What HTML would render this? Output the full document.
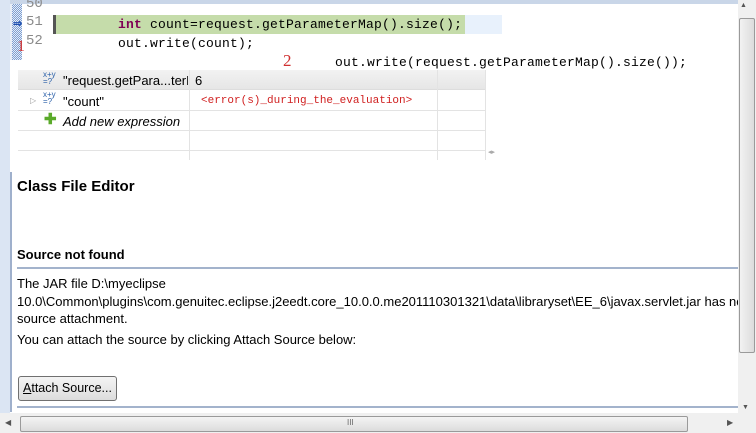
<!DOCTYPE html>
<html><head><style>
*{margin:0;padding:0;box-sizing:border-box}
body{width:756px;height:433px;overflow:hidden;background:#fff;position:relative;font-family:"Liberation Sans",sans-serif}
.a{position:absolute}
.code{font-family:"Liberation Mono",monospace;font-size:13px;color:#000;white-space:pre}
.t{font-size:13px;color:#000;white-space:pre}
</style></head><body>
<div class="a" style="left:0;top:0;width:756px;height:4px;background:#c9d6e8"></div>
<div class="a" style="left:0;top:0;width:10px;height:433px;background:#dbe5f3"></div>
<div class="a" style="left:10px;top:4px;width:2px;height:56px;background:#e8eef7"></div>
<div class="a" style="left:12px;top:4px;width:10px;height:56px;background:repeating-conic-gradient(#7f9fd0 0 25%,#e4ecf8 0 50%) 0 0/2px 2px"></div>
<div class="a code" style="left:26px;top:-4px;color:#8a8a8a;font-size:14px">50</div>
<div class="a code" style="left:26px;top:14px;color:#8a8a8a;font-size:14px">51</div>
<div class="a code" style="left:26px;top:33px;color:#8a8a8a;font-size:14px">52</div>
<div class="a" style="left:13px;top:17px;font-size:11px;color:#2050b0;font-weight:bold">⇒</div>
<div class="a" style="left:17px;top:38px;font-size:16px;color:#d03030;font-family:'Liberation Serif',serif">1</div>
<div class="a" style="left:53px;top:15px;width:48px;height:19px;background:#fff;border-left:3px solid #555"></div>
<div class="a" style="left:56px;top:15px;width:409px;height:19px;background:#c5dcaa"></div>
<div class="a" style="left:465px;top:15px;width:37px;height:19px;background:#e8f1fc"></div>
<div class="a code" style="left:118px;top:17px;letter-spacing:0.2px"><b style="color:#7f0055">int</b> count=request.getParameterMap().size();</div>
<div class="a code" style="left:118px;top:36px;letter-spacing:0.2px">out.write(count);</div>
<div class="a code" style="left:335px;top:55px;letter-spacing:0.2px">out.write(request.getParameterMap().size());</div>
<div class="a" style="left:283px;top:51px;font-size:17px;color:#d03030;font-family:'Liberation Serif',serif">2</div>
<!-- popup -->
<div class="a" style="left:10px;top:60px;width:270px;height:100px;background:#fff"></div>
<div class="a" style="left:18px;top:70px;width:472px;height:90px;background:#fff">
 <div class="a" style="left:0;top:0;width:467px;height:20px;background:linear-gradient(#f2f2f2,#e6e6e6);border-bottom:1px solid #ddd"></div>
 <div class="a" style="left:171px;top:0;width:1px;height:90px;background:#e3e3e3"></div>
 <div class="a" style="left:419px;top:0;width:1px;height:90px;background:#e3e3e3"></div>
 <div class="a" style="left:467px;top:0;width:1px;height:90px;background:#e3e3e3"></div>
 <div class="a" style="left:0;top:40px;width:467px;height:1px;background:#e3e3e3"></div>
 <div class="a" style="left:0;top:60px;width:467px;height:1px;background:#e3e3e3"></div>
 <div class="a" style="left:0;top:80px;width:467px;height:1px;background:#e3e3e3"></div>
 <div class="a" style="left:25px;top:1px;font-size:8px;line-height:7px;color:#2a5fa8">x+y<br>=?</div>
 <div class="a t" style="left:45px;top:3px;width:125px;overflow:hidden">"request.getPara...terMap"</div>
 <div class="a t" style="left:177px;top:3px">6</div>
 <div class="a" style="left:12px;top:26px;font-size:8px;color:#999">▷</div>
 <div class="a" style="left:25px;top:21px;font-size:8px;line-height:7px;color:#2a5fa8">x+y<br>=?</div>
 <div class="a t" style="left:45px;top:24px">"count"</div>
 <div class="a code" style="left:183px;top:25px;font-size:11px;color:#d02020">&lt;error(s)_during_the_evaluation&gt;</div>
 <div class="a" style="left:26px;top:43px;font-size:15px;font-weight:bold;color:#5aaa2a;line-height:14px">✚</div>
 <div class="a t" style="left:45px;top:44px;font-style:italic">Add new expression</div>
 <div class="a" style="left:470px;top:78px;font-size:7px;color:#aaa">◂▸</div>
</div>
<!-- class file editor -->
<div class="a" style="left:10px;top:172px;width:2px;height:240px;background:#9fb0cc"></div>
<div class="a" style="left:17px;top:178px;font-size:15px;font-weight:bold">Class File Editor</div>
<div class="a" style="left:17px;top:247px;font-size:13px;font-weight:bold">Source not found</div>
<div class="a" style="left:17px;top:267px;width:721px;height:2px;background:#a3b3cc"></div>
<div class="a t" style="left:17px;top:275px;line-height:17.5px">The JAR file D:\myeclipse
10.0\Common\plugins\com.genuitec.eclipse.j2eedt.core_10.0.0.me201110301321\data\libraryset\EE_6\javax.servlet.jar has nc
source attachment.</div>
<div class="a t" style="left:17px;top:332px">You can attach the source by clicking Attach Source below:</div>
<div class="a" style="left:18px;top:376px;width:99px;height:25px;border:1px solid #707070;border-radius:3px;background:linear-gradient(#f4f4f4,#dcdcdc)"></div>
<div class="a t" style="left:23px;top:381px;font-size:12.5px"><u>A</u>ttach Source...</div>
<div class="a" style="left:17px;top:406px;width:721px;height:2px;background:#a3b3cc"></div>
<!-- scrollbars -->
<div class="a" style="left:738px;top:0;width:18px;height:413px;background:#f0f0f0"></div>
<div class="a" style="left:740px;top:2px;font-size:7px;color:#555">▲</div>
<div class="a" style="left:739px;top:18px;width:16px;height:335px;border:1px solid #9a9a9a;border-radius:2px;background:linear-gradient(90deg,#f2f2f2,#dcdcdc)"></div>
<div class="a" style="left:742px;top:404px;font-size:7px;color:#555">▼</div>
<div class="a" style="left:0;top:413px;width:756px;height:20px;background:#f0f0f0"></div>
<div class="a" style="left:5px;top:418px;font-size:8px;color:#555">◀</div>
<div class="a" style="left:20px;top:416px;width:668px;height:16px;border:1px solid #9a9a9a;border-radius:2px;background:linear-gradient(#f4f4f4,#dcdcdc)"></div>
<div class="a" style="left:347px;top:418px;font-size:8px;color:#666">III</div>
<div class="a" style="left:727px;top:418px;font-size:8px;color:#555">▶</div>
</body></html>
